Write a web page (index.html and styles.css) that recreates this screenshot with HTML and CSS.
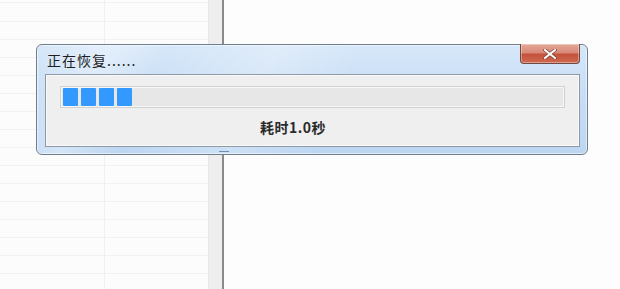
FILE: index.html
```html
<!DOCTYPE html>
<html lang="zh-CN">
<head>
<meta charset="utf-8">
<title>正在恢复</title>
<link rel="stylesheet" href="styles.css">
</head>
<body>
<div class="desktop">
  <div class="sheet"></div>
  <div class="strip"></div>
  <div class="divider"></div>
  <div class="blank"></div>

  <div class="window">
    <div class="titlebar">
      <span class="title">正在恢复......</span>
      <button class="close" aria-label="关闭">
        <svg width="14" height="10" viewBox="0 0 14 10">
          <path d="M2 1 L12 9 M12 1 L2 9" stroke="#7a3a30" stroke-width="3.4" stroke-linecap="square"/>
          <path d="M2 1 L12 9 M12 1 L2 9" stroke="#ffffff" stroke-width="2" stroke-linecap="square"/>
        </svg>
      </button>
    </div>
    <div class="panel">
      <div class="track">
        <span class="block"></span>
        <span class="block"></span>
        <span class="block"></span>
        <span class="block"></span>
      </div>
      <div class="elapsed">耗时1.0秒</div>
    </div>
    <div class="grip"></div>
  </div>
</div>
</body>
</html>
```

FILE: styles.css
```css
html, body {
  margin: 0;
  padding: 0;
  background: #fdfdfd;
}

.desktop {
  position: relative;
  width: 620px;
  height: 289px;
  display: flex;
  overflow: hidden;
  font-family: "Noto Sans CJK SC", "Noto Sans", sans-serif;
}

.sheet {
  width: 208px;
  height: 100%;
  background-color: #fcfcfc;
  background-image:
    linear-gradient(to right, transparent 104px, #f0f0f0 104px, #f0f0f0 105px, transparent 105px),
    repeating-linear-gradient(to bottom, transparent 0, transparent 16px, #f1f1f1 16px, #f1f1f1 17px, transparent 17px, transparent 18px);
  background-position: 0 0, 0 5px;
  border-right: 1px solid #e6e6e6;
}

.strip {
  width: 13px;
  height: 100%;
  background: #eeeeee;
}

.divider {
  width: 2px;
  height: 100%;
  background: #8a8a8a;
}

.blank {
  flex: 1;
  height: 100%;
  background: #fdfdfd;
}

.window {
  position: absolute;
  left: 36px;
  top: 44px;
  width: 552px;
  height: 111px;
  box-sizing: border-box;
  border: 1px solid #6f7d8c;
  border-radius: 6px;
  padding: 0 7px 7px 8px;
  display: flex;
  flex-direction: column;
  background:
    linear-gradient(115deg, rgba(255,255,255,0) 0%, rgba(255,255,255,0.35) 12%, rgba(255,255,255,0) 22%, rgba(255,255,255,0.25) 40%, rgba(255,255,255,0) 55%),
    linear-gradient(to bottom, #d6e7f9 0%, #c9def5 40%, #bcd6f2 100%);
  box-shadow: inset 0 0 0 1px rgba(255,255,255,0.55);
}

.titlebar {
  position: relative;
  height: 29px;
  display: flex;
  align-items: center;
}

.title {
  margin-left: 2px;
  margin-top: 1px;
  font-size: 14px;
  color: #1e1e1e;
  letter-spacing: 1px;
}

.close {
  position: absolute;
  top: -1px;
  right: 0;
  width: 60px;
  height: 20px;
  padding: 0;
  border: 1px solid #6f4a44;
  border-top: none;
  border-radius: 0 0 4px 4px;
  background: linear-gradient(to bottom, #e3a999 0%, #d98a77 45%, #c4523b 55%, #cf6a52 100%);
  box-shadow: inset 0 0 0 1px rgba(255,255,255,0.35);
  display: flex;
  align-items: center;
  justify-content: center;
}

.panel {
  flex: 1;
  border: 1px solid #8d99a6;
  background: #efefef;
  box-shadow: inset 0 0 0 1px #fafafa;
  display: flex;
  flex-direction: column;
  padding: 11px 0 0 14px;
}

.track {
  width: 505px;
  height: 22px;
  box-sizing: border-box;
  border: 1px solid #d2d2d2;
  background: #e7e7e7;
  box-shadow: inset 0 0 0 1px #f6f6f6;
  display: flex;
  align-items: center;
  gap: 3px;
  padding-left: 2px;
}

.block {
  width: 15px;
  height: 18px;
  background: #3399ff;
  border-radius: 1px;
}

.elapsed {
  margin-top: 11px;
  margin-left: 200px;
  font-size: 14px;
  font-weight: bold;
  letter-spacing: 0.5px;
  color: #2b2b2b;
  line-height: 17px;
}

.grip {
  position: absolute;
  left: 182px;
  bottom: 1px;
  width: 10px;
  height: 3px;
  background-image: radial-gradient(circle, #6f8fb8 0.8px, transparent 1px);
  background-size: 2px 3px;
}
```
